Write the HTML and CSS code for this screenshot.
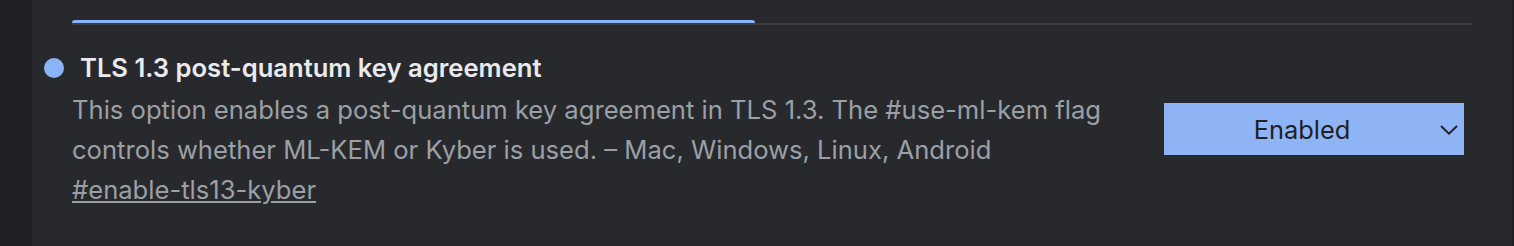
FILE: index.html
```html
<!DOCTYPE html>
<html lang="en">
<head>
<meta charset="utf-8">
<title>Flags</title>
<link rel="stylesheet" href="styles.css">
</head>
<body>
<div class="sidebar"></div>
<main class="main">
  <div class="tabbar">
    <div class="indicator"></div>
    <div class="rule"></div>
  </div>
  <section class="experiment">
    <h2 class="title"><span class="dot"></span>TLS 1.3 post-quantum key agreement</h2>
    <div class="row">
      <div class="desc">
        <p class="text">This option enables a post-quantum key agreement in TLS 1.3. The #use-ml-kem flag controls whether ML-KEM or Kyber is used. – Mac, Windows, Linux, Android</p>
        <a class="link" href="#enable-tls13-kyber">#enable-tls13-kyber</a>
      </div>
      <div class="select">
        <span class="select-label">Enabled</span>
        <svg class="chevron" width="18" height="10" viewBox="0 0 18 10"><path d="M1 1 L9 8.6 L17 1" fill="none" stroke="#202124" stroke-width="2"/></svg>
      </div>
    </div>
  </section>
</main>
<div class="edge"></div>
</body>
</html>
```
FILE: styles.css
```css
html, body {
  margin: 0;
  height: 100%;
}
body {
  display: flex;
  background: #28292d;
  font-family: Inter, "Noto Sans", sans-serif;
  overflow: hidden;
}
.sidebar {
  width: 32px;
  flex: none;
  background: #1f2023;
}
.edge {
  width: 2px;
  flex: none;
  background: #1f2023;
}
.main {
  flex: 1;
  padding: 20px 40px 0 40px;
}
.indicator {
  width: 683px;
  height: 4px;
  background: #8ab4f8;
  border-radius: 3px 3px 0 0;
}
.rule {
  height: 2px;
  background: #3c3d41;
  margin-top: -1px;
}
.title {
  position: relative;
  margin: 27px 0 0 8px;
  font-size: 25.6px;
  font-weight: 600;
  color: #e8eaed;
  line-height: 32px;
}
.dot {
  position: absolute;
  left: -36px;
  top: 6px;
  width: 20px;
  height: 20px;
  border-radius: 50%;
  background: #8ab4f8;
}
.row {
  display: flex;
  align-items: flex-start;
  justify-content: space-between;
  margin-top: 6px;
}
.desc {
  width: 1060px;
}
.text {
  margin: 0;
  font-size: 25.6px;
  line-height: 40px;
  color: #9aa0a6;
}
.link {
  font-size: 25.6px;
  line-height: 40px;
  color: #9aa0a6;
}
.select {
  width: 300px;
  height: 52px;
  margin: 13px 8px 0 0;
  background: #8fb4f5;
  display: flex;
  align-items: center;
  position: relative;
  flex: none;
}
.select-label {
  flex: 1;
  text-align: center;
  padding-right: 24px;
  font-size: 25.4px;
  color: #202124;
}
.chevron {
  position: absolute;
  right: 6px;
  top: 22px;
}
```
